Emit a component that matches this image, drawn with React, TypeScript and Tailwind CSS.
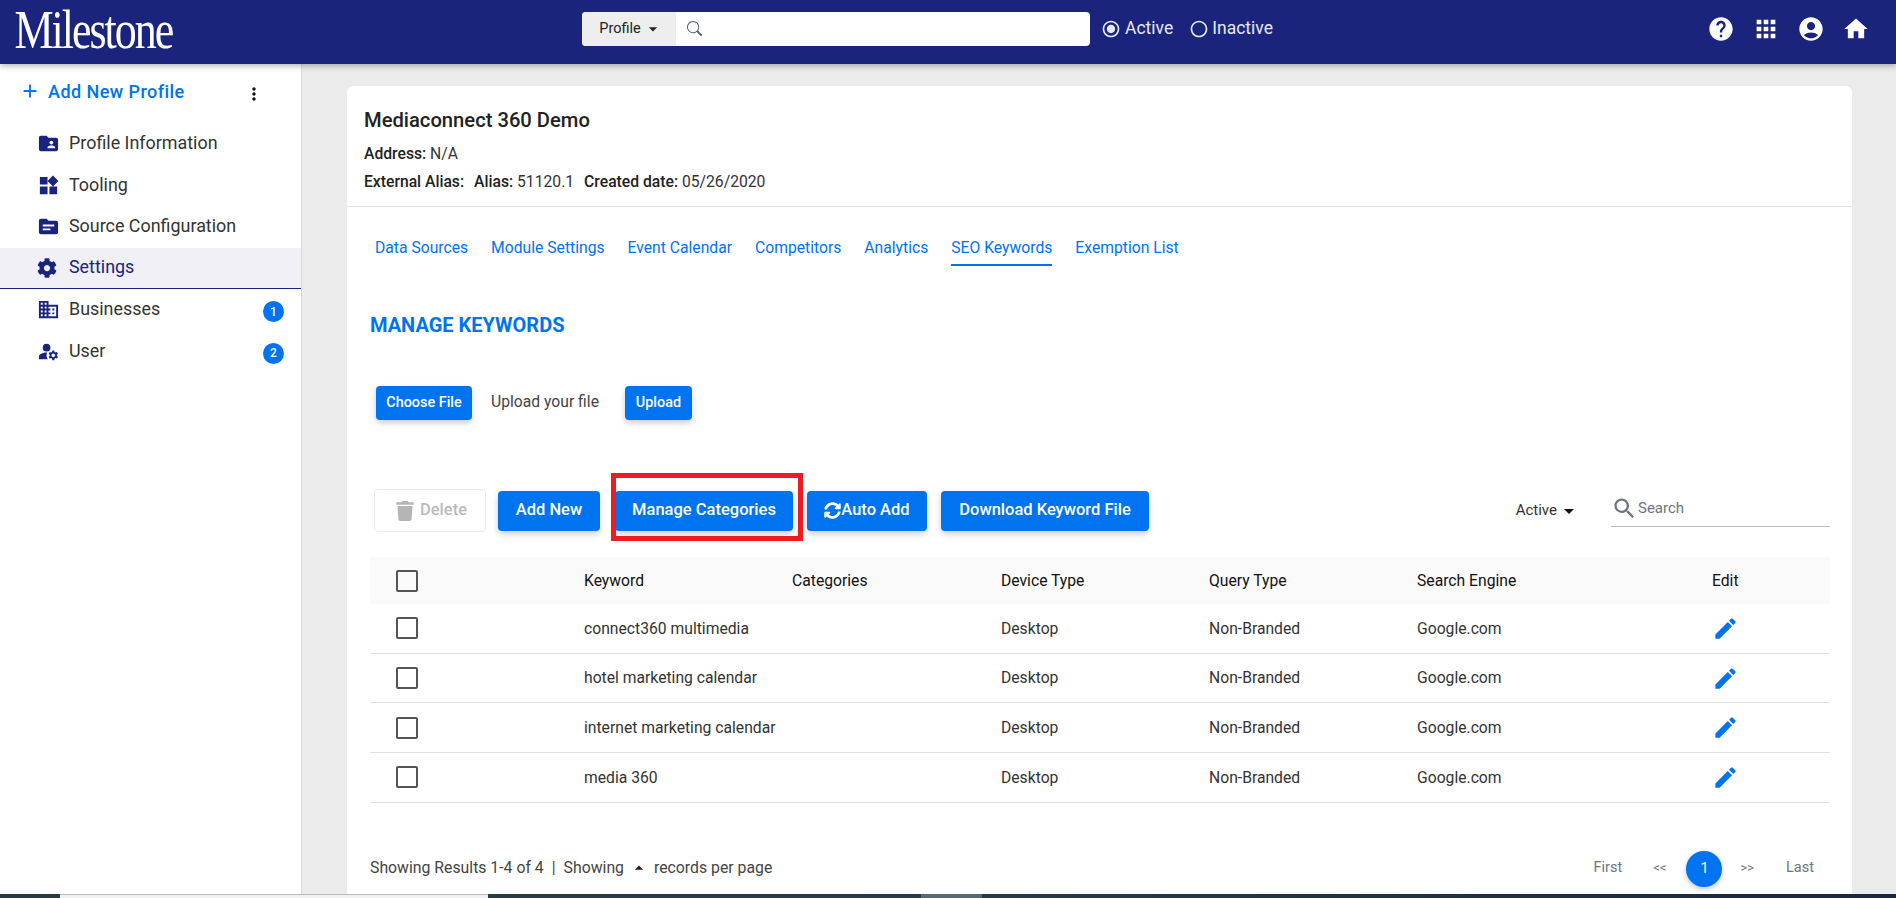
import type { ReactNode } from "react";
import { FaCog, FaSyncAlt, FaTrash } from "react-icons/fa";
import { BsSearch } from "react-icons/bs";
import {
  MdAdd,
  MdAccountCircle,
  MdApps,
  MdArrowDropDown,
  MdArrowDropUp,
  MdDomain,
  MdEdit,
  MdFolderShared,
  MdHelp,
  MdHome,
  MdManageAccounts,
  MdMoreVert,
  MdRadioButtonChecked,
  MdRadioButtonUnchecked,
  MdSearch,
  MdTopic,
  MdWidgets,
} from "react-icons/md";

const navItems = [
  { label: "Profile Information", icon: <MdFolderShared /> },
  { label: "Tooling", icon: <MdWidgets /> },
  { label: "Source Configuration", icon: <MdTopic /> },
  { label: "Settings", icon: <FaCog className="text-[20px]" />, active: true },
  { label: "Businesses", icon: <MdDomain />, badge: 1 },
  { label: "User", icon: <MdManageAccounts />, badge: 2 },
];

const tabs = ["Data Sources", "Module Settings", "Event Calendar", "Competitors", "Analytics", "SEO Keywords", "Exemption List"];

const keywords = ["connect360 multimedia", "hotel marketing calendar", "internet marketing calendar", "media 360"];

const rowGrid = "grid grid-cols-[214px_208px_209px_208px_208px_295px_1fr] items-center";

function Header() {
  return (
    <header className="relative z-10 flex h-16 shrink-0 items-center bg-[#1a247c] shadow-[0_2px_6px_rgba(0,0,0,0.3)]">
      <div className="w-[582px] shrink-0 origin-left scale-x-[0.8] whitespace-nowrap pb-[6px] pl-[18px] font-['Liberation_Serif',serif] text-[55px] leading-none tracking-[-2.5px] text-white">
        Milestone
      </div>
      <div className="mb-[7px] flex h-[34px] w-[508px] overflow-hidden rounded-[4px] bg-white">
        <div className="flex w-[94px] items-center justify-center bg-[#eeeeee] pl-[4px] text-[14.5px] text-[#222]">
          Profile
          <MdArrowDropDown className="ml-[2px] text-[20px]" />
        </div>
        <div className="flex items-center pl-[11px] text-[#55606b]">
          <BsSearch className="text-[15px]" />
        </div>
      </div>
      <div className="mb-[7px] ml-[11px] flex items-center text-[17.5px] text-[#e6e8f2]">
        <MdRadioButtonChecked className="mr-[4px] text-[20px]" />
        Active
        <MdRadioButtonUnchecked className="ml-[16px] mr-[3px] text-[20px]" />
        Inactive
      </div>
      <div className="ml-auto mb-[7px] flex items-center gap-[17px] pr-[26px] text-[28px] text-white">
        <MdHelp />
        <MdApps />
        <MdAccountCircle />
        <MdHome />
      </div>
    </header>
  );
}

function Sidebar() {
  return (
    <aside className="w-[302px] shrink-0 border-r border-[#dcdcdc] bg-white">
      <div className="flex h-[58px] items-center pb-[4px] pl-[19px] pr-[37px]">
        <MdAdd className="text-[22px] text-[#0073f0]" />
        <span className="ml-[7px] text-[18px] font-medium tracking-[0.45px] text-[#0073f0]">Add New Profile</span>
        <MdMoreVert className="ml-auto mt-[5px] text-[20px] text-[#111]" />
      </div>
      <nav className="mt-[1px]">
        {navItems.map((item) => (
          <div
            key={item.label}
            className={`flex h-[41.5px] items-center pl-[37px] pr-[17px] text-[17.9px] ${
              item.active ? "border-b border-[#1a247c] bg-[#f0f0f6] text-[#1a247c]" : "text-[#333]"
            }`}
          >
            <span className="flex w-[32px] shrink-0 items-center text-[23px] text-[#1a247c]">{item.icon}</span>
            {item.label}
            {item.badge && (
              <span className="ml-auto mt-[4px] flex h-[21px] w-[21px] items-center justify-center rounded-full bg-[#0073f0] text-[12px] font-medium text-white">
                {item.badge}
              </span>
            )}
          </div>
        ))}
      </nav>
    </aside>
  );
}

function BlueButton({ children, className }: { children: ReactNode; className: string }) {
  return (
    <button className={`flex items-center justify-center rounded-[4px] bg-[#0073f0] font-medium text-white shadow-[0_3px_6px_rgba(0,0,0,0.2)] ${className}`}>
      {children}
    </button>
  );
}

function Checkbox() {
  return <input type="checkbox" className="ml-[26px] h-[22px] w-[22px] appearance-none rounded-[2px] border-2 border-[#555]" />;
}

function KeywordTable() {
  return (
    <div className="ml-[23px] mr-[22px] mt-[25px] text-[15.7px]">
      <div className={`${rowGrid} h-[47px] bg-[#fafafa] text-[#111]`}>
        <Checkbox />
        <span>Keyword</span>
        <span>Categories</span>
        <span>Device Type</span>
        <span>Query Type</span>
        <span>Search Engine</span>
        <span>Edit</span>
      </div>
      {keywords.map((k) => (
        <div key={k} className={`${rowGrid} h-[49.7px] border-b border-[#dfe0e6] text-[#333]`}>
          <Checkbox />
          <span className="whitespace-nowrap">{k}</span>
          <span />
          <span>Desktop</span>
          <span>Non-Branded</span>
          <span>Google.com</span>
          <MdEdit className="text-[27px] text-[#0073f0]" />
        </div>
      ))}
    </div>
  );
}

function Pagination() {
  return (
    <div className="ml-auto mr-[15px] flex items-center text-[14.5px] text-[#6c757d]">
      <span>First</span>
      <span className="ml-[31px] text-[13px]">&lt;&lt;</span>
      <span className="ml-[20px] mt-[2px] flex h-[36px] w-[36px] items-center justify-center rounded-full bg-[#0073f0] text-white shadow-[0_2px_5px_rgba(0,0,0,0.25)]">
        1
      </span>
      <span className="ml-[18px] text-[13px]">&gt;&gt;</span>
      <span className="ml-[32px]">Last</span>
    </div>
  );
}

function Card() {
  return (
    <section className="flex h-full flex-col rounded-t-[6px] bg-white">
      <div className="h-[121px] shrink-0 border-b border-[#e0e3ea] pl-[17px] pt-[22px] text-[15.7px] text-[#333]">
        <h1 className="text-[20.2px] font-medium leading-[24px] text-[#222]">Mediaconnect 360 Demo</h1>
        <p className="mt-[13px] leading-[18px]">
          <b className="font-medium text-[#222]">Address:</b> N/A
        </p>
        <p className="mt-[10px] leading-[18px]">
          <b className="font-medium text-[#222]">External Alias:</b>
          <b className="ml-[10px] font-medium text-[#222]">Alias:</b> 51120.1
          <b className="ml-[10px] font-medium text-[#222]">Created date:</b> 05/26/2020
        </p>
      </div>

      <div className="mt-[30px] flex gap-[23px] pl-[28px] text-[15.7px] text-[#0073f0]">
        {tabs.map((t) => (
          <span key={t} className={`pb-[5px] leading-[22px] ${t === "SEO Keywords" ? "border-b-2 border-[#0073f0]" : ""}`}>
            {t}
          </span>
        ))}
      </div>

      <h2 className="ml-[23px] mt-[47px] text-[20px] font-bold leading-[24px] text-[#0073f0]">MANAGE KEYWORDS</h2>

      <div className="ml-[29px] mt-[49px] flex items-center">
        <BlueButton className="h-[34px] w-[96px] text-[14.4px]">Choose File</BlueButton>
        <span className="ml-[19px] mb-[2px] text-[15.7px] text-[#444]">Upload your file</span>
        <BlueButton className="ml-[26px] h-[34px] w-[67px] text-[14.4px]">Upload</BlueButton>
      </div>

      <div className="relative ml-[27px] mr-[22px] mt-[69px] flex h-[43px] items-center text-[16.5px]">
        <button className="flex h-[43px] w-[112px] items-center justify-center rounded-[4px] border border-[#eaeaea] pl-[2px] font-medium text-[#bbbbbb]">
          <FaTrash className="mr-[5px] text-[20px] text-[#b5b5b5]" />
          Delete
        </button>
        <BlueButton className="ml-[12px] h-[40px] w-[102px]">Add New</BlueButton>
        <BlueButton className="ml-[15px] h-[40px] w-[178px]">Manage Categories</BlueButton>
        <BlueButton className="ml-[14px] h-[40px] w-[120px]">
          <FaSyncAlt className="text-[17px]" />
          Auto Add
        </BlueButton>
        <BlueButton className="ml-[14px] h-[40px] w-[208px]">Download Keyword File</BlueButton>

        <div className="ml-auto mr-[30px] flex items-center text-[15px] text-[#333]">
          Active
          <MdArrowDropDown className="text-[24px] text-[#111]" />
        </div>
        <div className="mb-[3px] flex h-[36px] w-[219px] items-center border-b border-[#bbbbbb] text-[15px] text-[#6c757d]">
          <MdSearch className="text-[27px]" />
          Search
        </div>

        {/* red callout round Manage Categories */}
        <div className="pointer-events-none absolute left-[237px] top-[-16px] h-[68px] w-[192px] border-[5px] border-[#ed1c24]" />
      </div>

      <KeywordTable />

      <div className="mx-[23px] mt-[46px] flex items-center text-[15.8px] text-[#444]">
        <span>Showing Results 1-4 of 4</span>
        <span className="mx-[8px]">|</span>
        <span>Showing</span>
        <MdArrowDropUp className="mx-[5px] text-[20px] text-[#222]" />
        <span>records per page</span>
        <Pagination />
      </div>
    </section>
  );
}

export default function App() {
  return (
    <div className="flex h-screen flex-col overflow-hidden bg-[#ebebeb] font-['Roboto',sans-serif]">
      <Header />
      <div className="flex min-h-0 flex-1">
        <Sidebar />
        <main className="min-w-0 flex-1 overflow-hidden pl-[45px] pr-[44px] pt-[22px]">
          <Card />
        </main>
      </div>
      {/* strip of the next window peeking in at the bottom */}
      <div className="flex h-[4px] shrink-0 bg-gradient-to-r from-[#263c42] via-[#263c48] to-[#1a2744]">
        <div className="ml-[60px] w-[428px] border-t border-[#bbbbbb] bg-[#f0f0f0]" />
        <div className="ml-[433px] w-[61px] bg-[#566a72]" />
      </div>
    </div>
  );
}
